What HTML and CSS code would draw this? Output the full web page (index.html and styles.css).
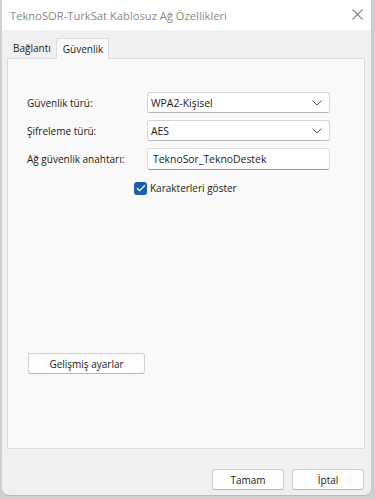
FILE: index.html
```html
<!DOCTYPE html>
<html lang="tr">
<head>
<meta charset="utf-8">
<link rel="stylesheet" href="styles.css">
</head>
<body>
<div class="window">
  <div class="titlebar">
    <span class="title">TeknoSOR-TurkSat Kablosuz Ağ Özellikleri</span>
    <svg class="close" width="11" height="11" viewBox="0 0 11 11"><path d="M0.5 0.5L10.5 10.5M10.5 0.5L0.5 10.5" stroke="#8a8a8a" stroke-width="1.1" fill="none"/></svg>
  </div>
  <div class="content">
    <div class="tabs">
      <div class="tab">Bağlantı</div>
      <div class="tab active">Güvenlik</div>
    </div>
    <div class="panel">
      <div class="form">
        <label class="lbl">Güvenlik türü:</label>
        <div class="combo"><span>WPA2-Kişisel</span><svg width="10" height="6" viewBox="0 0 10 6"><path d="M0.5 0.5L5 5L9.5 0.5" stroke="#555" stroke-width="1" fill="none"/></svg></div>
        <label class="lbl">Şifreleme türü:</label>
        <div class="combo"><span>AES</span><svg width="10" height="6" viewBox="0 0 10 6"><path d="M0.5 0.5L5 5L9.5 0.5" stroke="#555" stroke-width="1" fill="none"/></svg></div>
        <label class="lbl">Ağ güvenlik anahtarı:</label>
        <div class="textbox">TeknoSor_TeknoDestek</div>
      </div>
      <div class="checkrow">
        <span class="check"><svg width="10" height="8" viewBox="0 0 10 8"><path d="M1 4.2L3.6 6.6L9 1.2" stroke="#fff" stroke-width="1.3" fill="none"/></svg></span>
        <span>Karakterleri göster</span>
      </div>
      <div class="spacer"></div>
      <button class="btn adv">Gelişmiş ayarlar</button>
    </div>
    <div class="footer">
      <button class="btn foot">Tamam</button>
      <button class="btn foot">İptal</button>
    </div>
  </div>
</div>
</body>
</html>
```
FILE: styles.css
```css
html, body {
  margin: 0;
  padding: 0;
  background: #cfcfcf;
  font-family: "Open Sans", "Noto Sans", sans-serif;
  font-size: 10px;
  color: #1a1a1a;
}
.window {
  width: 369px;
  height: 495px;
  margin-left: 2px;
  background: #f0f0f0;
  border-right: 1px solid #c8c8c8;
  border-bottom: 1px solid #b8b8b8;
  border-radius: 0 0 7px 7px;
  display: flex;
  flex-direction: column;
  overflow: hidden;
}
.titlebar {
  height: 30px;
  background: #ffffff;
  display: flex;
  align-items: center;
  justify-content: space-between;
  padding: 0 8px 0 8px;
  flex: none;
}
.title {
  color: #8a8a8a;
  font-size: 11.2px;
}
.close { margin-top: -1px; }
.content {
  flex: 1;
  display: flex;
  flex-direction: column;
  padding: 7px 6px 0 5px;
}
.tabs {
  display: flex;
  align-items: flex-end;
  height: 21px;
  padding-left: 6px;
}
.tab {
  padding: 0 5px 3px 0;
  color: #1a1a1a;
}
.tab.active {
  background: #f9f9f9;
  border: 1px solid #dcdcdc;
  border-bottom: none;
  height: 21px;
  padding: 3px 5px 0 6px;
  box-sizing: border-box;
  margin-bottom: -1px;
  position: relative;
  z-index: 1;
}
.panel {
  height: 391px;
  box-sizing: border-box;
  background: #f9f9f9;
  border: 1px solid #dcdcdc;
  display: flex;
  flex-direction: column;
  padding: 33px 34px 0 19px;
}
.form {
  display: grid;
  grid-template-columns: 120px 1fr;
  row-gap: 7px;
  align-items: center;
}
.lbl { color: #1a1a1a; }
.combo {
  height: 21px;
  box-sizing: border-box;
  background: #fff;
  border: 1px solid #d5d5d5;
  border-bottom-color: #b5b5b5;
  border-radius: 3px;
  display: flex;
  align-items: center;
  justify-content: space-between;
  padding: 0 7px 0 3px;
  font-size: 10.4px;
}
.textbox {
  height: 22px;
  box-sizing: border-box;
  background: #fff;
  border: 1px solid #e0e0e0;
  border-bottom-color: #9a9a9a;
  border-radius: 3px;
  display: flex;
  align-items: center;
  padding: 0 5px;
  font-size: 10.4px;
}
.checkrow {
  display: flex;
  align-items: center;
  gap: 3px;
  margin-top: 11px;
  padding-left: 107px;
}
.check {
  width: 13px;
  height: 13px;
  border-radius: 3px;
  background: #1f5fb0;
  display: flex;
  align-items: center;
  justify-content: center;
}
.spacer { height: 158px; }
.btn {
  font-family: inherit;
  font-size: 10px;
  color: #1a1a1a;
  background: #fdfdfd;
  border: 1px solid #d0d0d0;
  border-bottom-color: #b5b5b5;
  border-radius: 3px;
  height: 21px;
  padding: 0;
  margin: 0;
}
.adv {
  width: 117px;
  margin-left: 1px;
}
.footer {
  display: flex;
  justify-content: flex-end;
  gap: 8px;
  padding: 20px 1px 0 0;
}
.foot { width: 72px; }
```
